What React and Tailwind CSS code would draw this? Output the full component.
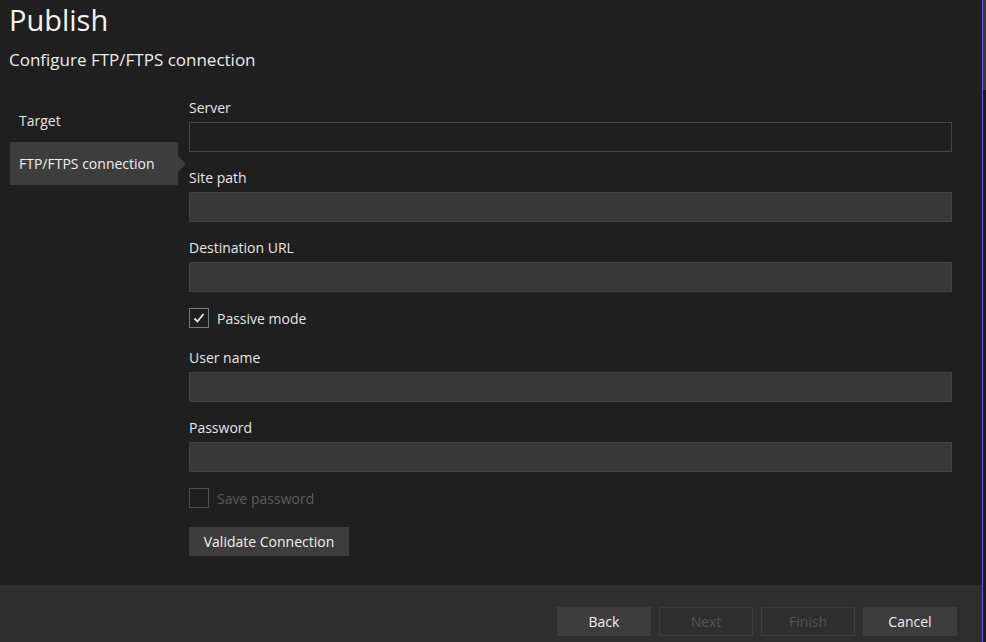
import React, { useState } from "react";

const font = { fontFamily: '"Open Sans", "Noto Sans", sans-serif' };

function Field({ label, value, onChange, variant = "filled" }) {
  return (
    <div className="flex flex-col">
      <label className="h-[19px] text-[14px] leading-[17px] text-[#e6e6e6]">{label}</label>
      <input
        value={value}
        onChange={(e) => onChange(e.target.value)}
        className={
          variant === "outline"
            ? "mt-[4px] h-[30px] w-[763px] border border-[#474747] bg-[#1f1f1f] px-2 text-[14px] text-white outline-none"
            : "mt-[4px] h-[30px] w-[763px] border border-[#434343] bg-[#383838] px-2 text-[14px] text-white outline-none"
        }
      />
    </div>
  );
}

function Check({ checked, disabled, label, onToggle }) {
  return (
    <button
      type="button"
      onClick={disabled ? undefined : onToggle}
      className="flex h-[20px] items-center gap-[8px] text-left"
    >
      <span
        className={
          disabled
            ? "flex h-[20px] w-[20px] items-center justify-center border border-[#505050]"
            : "flex h-[20px] w-[20px] items-center justify-center border border-[#7a7a7a]"
        }
      >
        {checked && (
          <svg width="14" height="14" viewBox="0 0 14 14">
            <path d="M2.5 7.5 L5.5 10.5 L11.5 3" fill="none" stroke="#e8e8e8" strokeWidth="1.8" />
          </svg>
        )}
      </span>
      <span className={disabled ? "text-[14px] text-[#5c5c5c]" : "text-[14px] text-[#e6e6e6]"}>{label}</span>
    </button>
  );
}

function FooterBtn({ children, disabled }) {
  return (
    <button
      type="button"
      disabled={disabled}
      className={
        disabled
          ? "h-[29px] w-[94px] border border-[#3c3c3c] bg-[#2e2e2e] text-[14px] text-[#555555]"
          : "h-[29px] w-[94px] bg-[#3d3d3d] text-[14px] text-[#f0f0f0]"
      }
    >
      {children}
    </button>
  );
}

export default function App() {
  const [form, setForm] = useState({ server: "", path: "", url: "", user: "", pass: "" });
  const [passive, setPassive] = useState(true);
  const set = (k) => (v) => setForm((f) => ({ ...f, [k]: v }));

  return (
    <div className="flex h-[642px] w-[986px] overflow-hidden bg-[#1f1f1f]" style={font}>
      <div className="flex w-[982px] flex-col">
        <div className="flex-1 pl-[9px]">
          <h1 className="h-[40px] text-[29px] leading-[40px] text-[#f2f2f2]">Publish</h1>
          <h2 className="mt-[9px] text-[17px] leading-[22px] text-[#ececec]">Configure FTP/FTPS connection</h2>

          <div className="mt-[28px] flex">
            <nav className="relative flex w-[169px] flex-col pl-[1px]">
              <div className="flex h-[43px] items-center pl-[9px] text-[14px] text-[#e6e6e6]">Target</div>
              <div className="relative flex h-[43px] items-center bg-[#3d3d3d] pl-[9px] text-[14px] text-[#f0f0f0]">
                FTP/FTPS connection
                <span className="absolute left-full top-1/2 h-0 w-0 -translate-y-1/2 border-y-[8px] border-l-[8px] border-y-transparent border-l-[#3d3d3d]" />
              </div>
            </nav>

            <div className="ml-[11px] flex flex-col">
              <Field label="Server" value={form.server} onChange={set("server")} variant="outline" />
              <div className="mt-[17px]">
                <Field label="Site path" value={form.path} onChange={set("path")} />
              </div>
              <div className="mt-[17px]">
                <Field label="Destination URL" value={form.url} onChange={set("url")} />
              </div>
              <div className="mt-[16px]">
                <Check checked={passive} label="Passive mode" onToggle={() => setPassive(!passive)} />
              </div>
              <div className="mt-[21px]">
                <Field label="User name" value={form.user} onChange={set("user")} />
              </div>
              <div className="mt-[17px]">
                <Field label="Password" value={form.pass} onChange={set("pass")} />
              </div>
              <div className="mt-[16px]">
                <Check checked={false} disabled label="Save password" />
              </div>
              <button
                type="button"
                className="mt-[19px] h-[29px] w-[160px] bg-[#3d3d3d] text-[14px] text-[#f0f0f0]"
              >
                Validate Connection
              </button>
            </div>
          </div>
        </div>

        <div className="flex h-[57px] items-start justify-end gap-[8px] bg-[#2e2e2e] pr-[25px] pt-[22px]">
          <FooterBtn>Back</FooterBtn>
          <FooterBtn disabled>Next</FooterBtn>
          <FooterBtn disabled>Finish</FooterBtn>
          <FooterBtn>Cancel</FooterBtn>
        </div>
      </div>
      <div className="w-[1px] bg-[#6a5cf0]" />
      <div className="flex w-[3px] flex-col">
        <div className="h-[90px] bg-[#3a3a3a]" />
        <div className="flex-1 bg-[#1a1a1a]" />
      </div>
    </div>
  );
}
